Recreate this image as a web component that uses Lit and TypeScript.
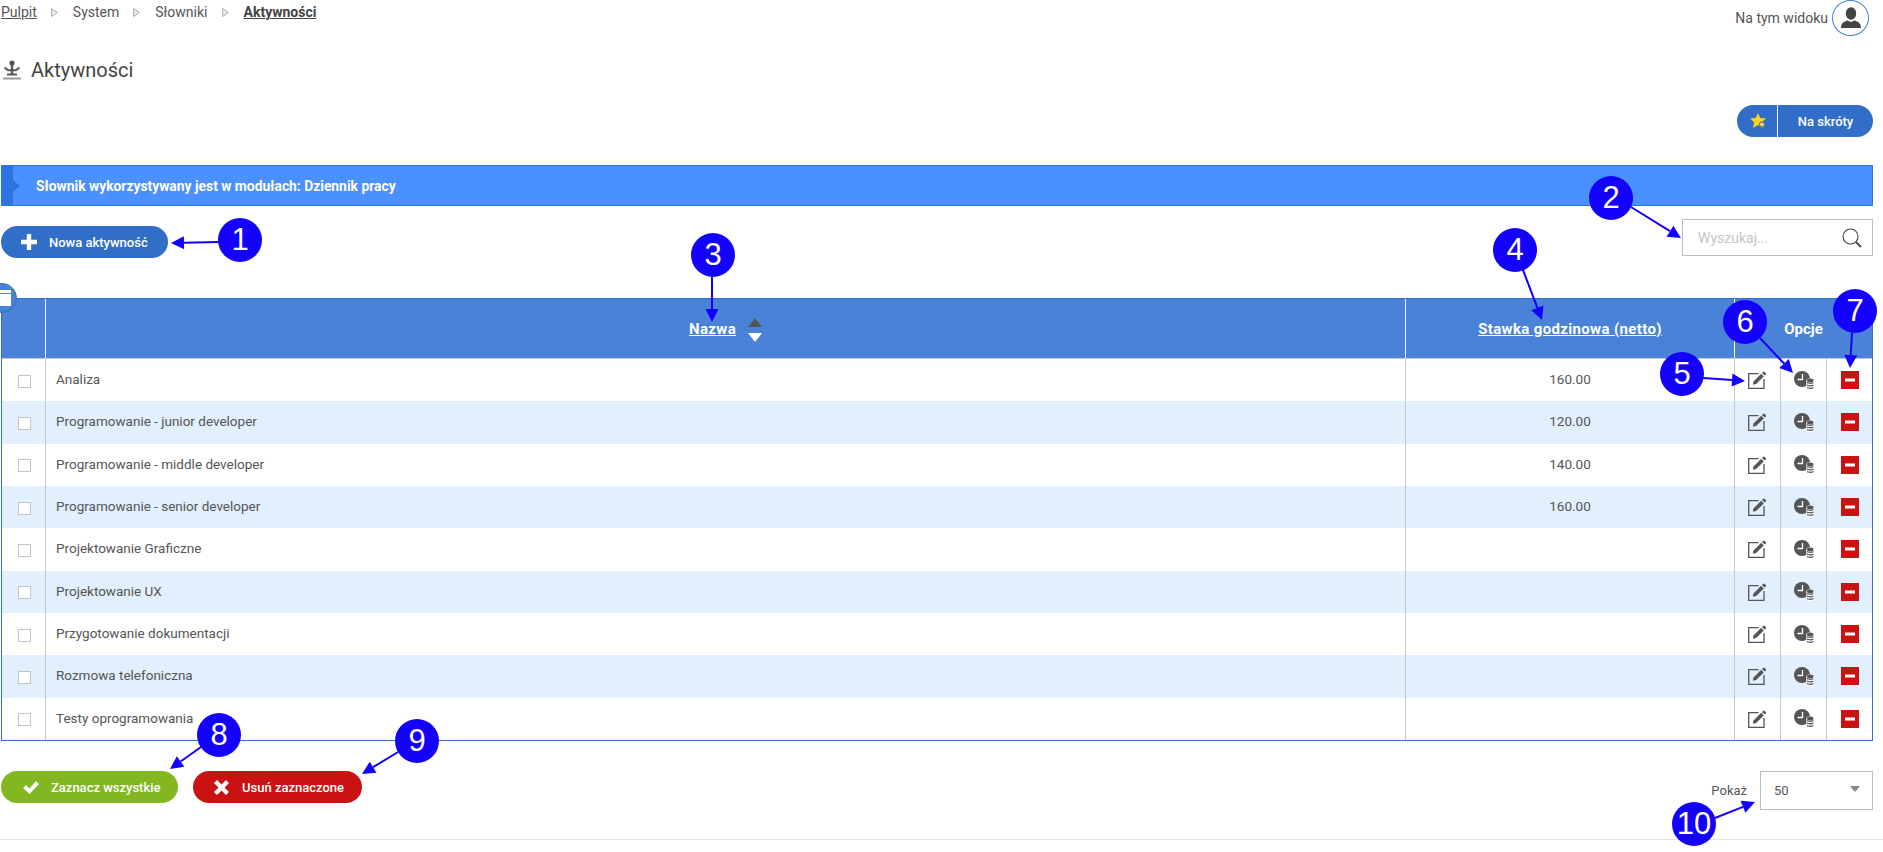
import { LitElement, html, css, svg } from "lit";
import { customElement } from "lit/decorators.js";

const rows: [string, string][] = [
  ["Analiza", "160.00"],
  ["Programowanie - junior developer", "120.00"],
  ["Programowanie - middle developer", "140.00"],
  ["Programowanie - senior developer", "160.00"],
  ["Projektowanie Graficzne", ""],
  ["Projektowanie UX", ""],
  ["Przygotowanie dokumentacji", ""],
  ["Rozmowa telefoniczna", ""],
  ["Testy oprogramowania", ""],
];

// [label, cx, cy, x1, y1, tipX, tipY]
const notes: [string, number, number, number, number, number, number][] = [
  ["1", 240, 240, 219, 242, 171, 243],
  ["2", 1611, 198, 1631, 207, 1681, 238],
  ["3", 713, 255, 712, 277, 712, 322],
  ["4", 1515, 250, 1523, 270, 1542, 320],
  ["5", 1682, 374, 1703, 378, 1745, 381],
  ["6", 1745, 322, 1760, 338, 1793, 373],
  ["7", 1855, 311, 1852, 333, 1850, 368],
  ["8", 219, 735, 201, 747, 170, 769],
  ["9", 417, 741, 398, 752, 362, 774],
  ["10", 1694, 824, 1715, 818, 1755, 802],
];

function arrow(n: (typeof notes)[number]) {
  const [, , , x1, y1, x2, y2] = n;
  const a = Math.atan2(y2 - y1, x2 - x1);
  const len = 13, w = 6.5;
  const bx = x2 - Math.cos(a) * len, by = y2 - Math.sin(a) * len;
  const px = -Math.sin(a) * w, py = Math.cos(a) * w;
  return svg`<line x1=${x1} y1=${y1} x2=${bx} y2=${by} stroke="#1400ff" stroke-width="2"/>
    <polygon points="${x2},${y2} ${bx + px},${by + py} ${bx - px},${by - py}" fill="#1400ff"/>`;
}

const editIcon = svg`<svg class="ico" width="19" height="18" viewBox="0 0 19 18">
  <path d="M10.500 2.700H.7V17.300H16V8" fill="none" stroke="#555" stroke-width="1.300"/>
  <path d="M5.500 10.500 13.200 2.800 15.800 5.400 8.100 13.100 4.800 13.800Z" fill="#555"/>
  <path d="M14 2 15.300.7a.8.8 0 0 1 1.100 0l1.500 1.500a.8.8 0 0 1 0 1.100L16.600 4.600Z" fill="#555"/></svg>`;

const clockIcon = svg`<svg class="ico" width="20" height="19" viewBox="0 0 20 19">
  <circle cx="8" cy="8" r="8" fill="#555"/>
  <path d="M8.500 3v5.500H3.500" fill="none" stroke="#fff" stroke-width="1.300"/>
  <rect x="12.300" y="7.500" width="7.700" height="11.500" rx="2" fill="#fff"/>
  <ellipse cx="16.200" cy="9.400" rx="3.300" ry="1.800" fill="#555"/>
  <path d="M12.900 10.800c1 1.200 5.600 1.200 6.600 0v1.200c-1 1.200-5.600 1.200-6.600 0ZM12.900 13.300c1 1.200 5.600 1.200 6.600 0v1.200c-1 1.200-5.600 1.200-6.600 0ZM12.900 15.800c1 1.200 5.600 1.200 6.600 0v1.200c-1 1.200-5.600 1.200-6.600 0Z" fill="#555"/></svg>`;

const minusIcon = svg`<svg class="ico" width="18" height="18" viewBox="0 0 18 18">
  <rect width="18" height="18" fill="#cb1212"/><rect x="4" y="7.500" width="10" height="3" fill="#fff"/></svg>`;

const sep = svg`<svg class="sep" width="7" height="9" viewBox="0 0 7 9"><path d="M.7.500V8.500L6.300 4.500Z" fill="#eee" stroke="#aaa" stroke-width="1"/></svg>`;

@customElement("app-root")
export class AppRoot extends LitElement {
  static styles = css`
    :host {
      display: block;
      position: relative;
      height: 852px;
      overflow: hidden;
      background: #fff;
      font-family: Roboto, "Liberation Sans", sans-serif;
      font-size: 13px;
      color: #555;
    }
    .page { padding: 0 10px 0 1px; }
    .top { height: 36px; display: flex; justify-content: space-between; align-items: flex-start; }
    .crumbs { display: flex; align-items: center; font-size: 14px; height: 24px; color: #555; }
    .crumbs a { color: #555; text-decoration: underline; margin-right: 14px; }
    .crumbs b { color: #444; text-decoration: underline; font-weight: 700; }
    .crumbs span { margin-right: 14px; }
    .sep { margin-right: 15px; flex: none; }
    .view { display: flex; align-items: center; gap: 4px; font-size: 14px; padding-right: 4px; }
    .avatar {
      box-sizing: border-box; width: 37px; height: 36px; border: 1px solid #4a82d8; border-radius: 50%;
      display: flex; align-items: center; justify-content: center;
    }
    .title { margin-top: 22px; height: 24px; display: flex; align-items: center; gap: 9px; font-size: 20px; color: #444; padding-left: 1px; }
    .actions { margin-top: 23px; display: flex; justify-content: flex-end; }
    .shortcut {
      display: flex; height: 32px; width: 136px; border-radius: 16px; background: #316ec8; color: #fff;
      font-weight: 500; align-items: stretch;
    }
    .shortcut .star { width: 41px; box-sizing: border-box; display: flex; align-items: center; justify-content: center; border-right: 1px solid #fff; padding-left: 2px; }
    .shortcut .lbl { flex: 1; display: flex; align-items: center; justify-content: center; }
    .banner {
      margin-top: 28px; height: 41px; box-sizing: border-box; background: #4a90ff;
      border: 1px solid #2e74d8; display: flex; align-items: center; position: relative;
      color: #fff; font-weight: 700; font-size: 13.85px; padding-left: 34px;
    }
    .stripe { position: absolute; left: 0; top: 0; bottom: 0; width: 11px; background: #2e74e0; }
    .chev { position: absolute; left: 11px; top: 14px; border-left: 7px solid #2e74e0; border-top: 6px solid transparent; border-bottom: 6px solid transparent; }
    .tools { margin-top: 13px; display: flex; justify-content: space-between; align-items: flex-start; height: 37px; }
    .btn {
      height: 32px; border-radius: 16px; color: #fff; display: flex; align-items: center; font-weight: 500; box-sizing: border-box;
    }
    .add { background: #316ec8; width: 167px; margin-top: 7px; padding-left: 20px; gap: 12px; }
    .search {
      box-sizing: border-box; width: 191px; height: 37px; border: 1px solid #bdbdbd;
      display: flex; align-items: center; justify-content: space-between; padding: 0 10px 0 15px; color: #c4c4c4; font-size: 14px;
    }
    .tablewrap { margin-top: 42px; position: relative; }
    .badge {
      position: absolute; left: -14px; top: -15px; width: 30px; height: 30px; box-sizing: border-box; border-radius: 50%;
      background: #4a82d8; border: 1px solid #316ec8; z-index: 2; display: flex; align-items: center; justify-content: flex-end; padding-right: 5px; overflow: hidden;
    }
    .badge i { display: block; width: 14px; height: 16px; background: linear-gradient(#fff 3px, #4a82d8 3px, #4a82d8 4px, #fff 4px); flex: none; }
    .table { border: 1px solid #2e6fc8; box-sizing: border-box; width: 1872px; height: 443px; }
    .row { display: grid; grid-template-columns: 44px 1360px 329px 46px 46px 45px; height: 42.33px; font-size: 13.5px; }
    .row.alt { background: #e2effd; }
    .cell { border-right: 1px solid #c8c8c8; display: flex; align-items: center; box-sizing: border-box; min-width: 0; }
    .cell:last-child { border-right: 0; }
    .cell.name { padding: 0 0 2px 10px; }
    .cell.c { justify-content: center; }
    .cell.rate { padding-bottom: 2px; }
    .head { display: grid; grid-template-columns: 44px 1360px 329px 137px; height: 59px; background: #4a82d8; color: #fff; font-weight: 700; font-size: 15px; border-bottom: 1px solid #c8c8c8; box-sizing: content-box; }
    .head .cell { border-right: 1px solid #fff; justify-content: center; }
    .head .cell:last-child { border-right: 0; }
    .head u { letter-spacing: .35px; }
    .sort { display: flex; flex-direction: column; gap: 6px; margin-left: 12px; margin-top: 3px; }
    .up { border: 7px solid transparent; border-top: 0; border-bottom: 9px solid #555; }
    .down { border: 7px solid transparent; border-bottom: 0; border-top: 9px solid #fff; }
    .check { width: 13px; height: 13px; box-sizing: border-box; border: 1px solid #c4c4c4; background: #fff; margin: 2px 0 0 1px; }
    .ico { display: block; }
    .foot { margin-top: 30px; display: flex; align-items: flex-start; height: 39px; }
    .sel { background: #82b722; width: 177px; padding-left: 21px; gap: 11px; }
    .del { background: #cb1212; width: 169px; margin-left: 15px; padding-left: 21px; gap: 13px; }
    .show { margin-left: auto; display: flex; align-items: center; gap: 13px; }
    .select {
      box-sizing: border-box; width: 113px; height: 39px; border: 1px solid #bdbdbd;
      display: flex; align-items: center; justify-content: space-between; padding: 0 12px 0 13px;
    }
    .caret { border: 5px solid transparent; border-bottom: 0; border-top: 6px solid #888; margin-top: -3px; }
    .rule { position: absolute; left: 0; right: 0; top: 839px; height: 1px; background: #e5e5e5; }
    .notes { position: absolute; left: 0; top: 0; z-index: 5; pointer-events: none; }
    .notes text { font-family: "Liberation Sans", Arial, sans-serif; font-size: 31px; fill: #fff; text-anchor: middle; }
  `;

  render() {
    return html`
      <div class="page">
        <div class="top">
          <div class="crumbs">
            <a>Pulpit</a>${sep}<span>System</span>${sep}<span>Słowniki</span>${sep}<b>Aktywności</b>
          </div>
          <div class="view">
            <span>Na tym widoku</span>
            <div class="avatar">
              <svg width="20" height="22" viewBox="0 0 20 22">
                <ellipse cx="10" cy="6.500" rx="5.200" ry="6.200" fill="#444"/>
                <path d="M0 21c0-5 3-6.500 6.500-7.500L10 15l3.500-1.500C17 14.500 20 16 20 21Z" fill="#444"/>
              </svg>
            </div>
          </div>
        </div>

        <div class="title">
          <svg width="20" height="20" viewBox="0 0 20 20">
            <circle cx="10" cy="3" r="2.600" fill="#555"/>
            <path d="M2.500 7.500 6 10.200h8l3.500-2.700" fill="none" stroke="#555" stroke-width="2"/>
            <rect x="8.800" y="5" width="2.400" height="9" fill="#555"/>
            <rect x="5" y="13.500" width="10" height="2" fill="#555"/>
            <rect x="1" y="17.500" width="18" height="2" fill="#999"/>
          </svg>
          <span>Aktywności</span>
        </div>

        <div class="actions">
          <div class="shortcut">
            <div class="star">
              <svg width="16" height="16" viewBox="0 0 16 16">
                <path d="M8 0l2.300 5 5.700.6-4.200 3.700 1.200 5.600L8 12l-5 2.900 1.200-5.600L0 5.600 5.700 5Z" fill="#ffd21e"/>
                <circle cx="12" cy="11.500" r="2.800" fill="#e0a92a" stroke="#316ec8" stroke-width=".8"/>
                <path d="M10.500 11.500h3" stroke="#fff" stroke-width="1"/>
              </svg>
            </div>
            <div class="lbl">Na skróty</div>
          </div>
        </div>

        <div class="banner">
          <div class="stripe"></div><div class="chev"></div>
          Słownik wykorzystywany jest w modułach: Dziennik pracy
        </div>

        <div class="tools">
          <div class="btn add">
            <svg width="16" height="16" viewBox="0 0 16 16"><path d="M5.800 0h4.400v5.800H16v4.400h-5.800V16H5.800v-5.800H0V5.800h5.800Z" fill="#fff"/></svg>
            <span>Nowa aktywność</span>
          </div>
          <div class="search">
            <span>Wyszukaj...</span>
            <svg width="20" height="20" viewBox="0 0 20 20">
              <circle cx="8.500" cy="8.500" r="7.500" fill="none" stroke="#444" stroke-width="1.100"/>
              <path d="M14 14l5 5" stroke="#444" stroke-width="1.800"/>
            </svg>
          </div>
        </div>

        <div class="tablewrap">
          <div class="badge"><i></i></div>
          <div class="table">
            <div class="head">
              <div class="cell"></div>
              <div class="cell"><u>Nazwa</u><div class="sort"><div class="up"></div><div class="down"></div></div></div>
              <div class="cell"><u>Stawka godzinowa (netto)</u></div>
              <div class="cell">Opcje</div>
            </div>
            ${rows.map(
              (r, i) => html`
                <div class="row ${i % 2 ? "alt" : ""}">
                  <div class="cell c"><div class="check"></div></div>
                  <div class="cell name">${r[0]}</div>
                  <div class="cell c rate">${r[1]}</div>
                  <div class="cell c">${editIcon}</div>
                  <div class="cell c">${clockIcon}</div>
                  <div class="cell c">${minusIcon}</div>
                </div>
              `
            )}
          </div>
        </div>

        <div class="foot">
          <div class="btn sel">
            <svg width="18" height="15" viewBox="0 0 18 15"><path d="M1 8l3-3 3.500 3.500L14 1l3 3-9.500 10Z" fill="#fff"/></svg>
            <span>Zaznacz wszystkie</span>
          </div>
          <div class="btn del">
            <svg width="15" height="15" viewBox="0 0 15 15"><path d="M0 3l3-3 4.500 4.500L12 0l3 3-4.500 4.500L15 12l-3 3-4.500-4.500L3 15l-3-3 4.500-4.500Z" fill="#fff"/></svg>
            <span>Usuń zaznaczone</span>
          </div>
          <div class="show">
            <span>Pokaż</span>
            <div class="select"><span>50</span><i class="caret"></i></div>
          </div>
        </div>
      </div>
      <div class="rule"></div>
      <svg class="notes" width="1883" height="852" viewBox="0 0 1883 852">
        ${notes.map(
          (n) => svg`${arrow(n)}
            <circle cx=${n[1]} cy=${n[2]} r="22" fill="#1400ff"/>
            <text x=${n[1]} y=${n[2] + 10}>${n[0]}</text>`
        )}
      </svg>
    `;
  }
}
